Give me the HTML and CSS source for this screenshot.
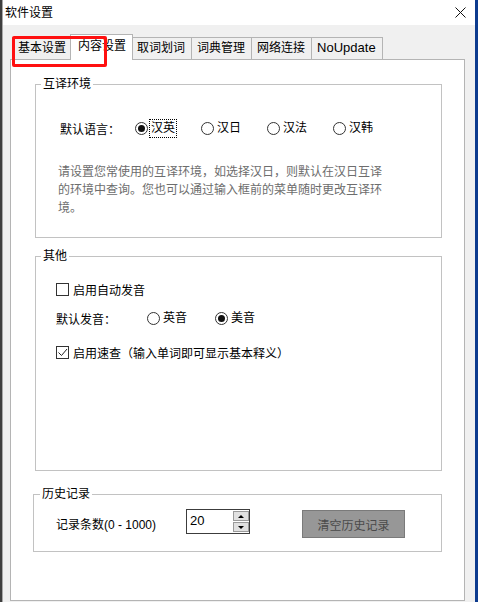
FILE: index.html
```html
<!DOCTYPE html>
<html lang="zh-CN">
<head>
    <meta charset="UTF-8">
    <title>软件设置</title>
    <link rel="stylesheet" href="styles.css">
</head>
<body>
    <div class="window">
        <div class="titlebar">
            <span class="title">软件设置</span>
            <svg class="close" width="11" height="11" viewBox="0 0 11 11">
                <path d="M0.5 0.5 L10.5 10.5 M10.5 0.5 L0.5 10.5" stroke="#111" stroke-width="1"/>
            </svg>
        </div>

        <div class="dialog">
            <div class="tabs">
                <div class="tab">基本设置</div>
                <div class="tab active">内容设置</div>
                <div class="tab">取词划词</div>
                <div class="tab">词典管理</div>
                <div class="tab">网络连接</div>
                <div class="tab latin last">NoUpdate</div>
            </div>

            <div class="panel">
                <fieldset class="group group-lang">
                    <legend>互译环境</legend>
                    <div class="row lang-row">
                        <span class="label">默认语言：</span>
                        <label class="radio-item"><span class="radio checked"></span><span class="focus">汉英</span></label>
                        <label class="radio-item"><span class="radio"></span><span class="text">汉日</span></label>
                        <label class="radio-item"><span class="radio"></span><span class="text">汉法</span></label>
                        <label class="radio-item"><span class="radio"></span><span class="text">汉韩</span></label>
                    </div>
                    <p class="desc">请设置您常使用的互译环境，如选择汉日，则默认在汉日互译的环境中查询。您也可以通过输入框前的菜单随时更改互译环境。</p>
                </fieldset>

                <fieldset class="group group-other">
                    <legend>其他</legend>
                    <label class="row check-row first">
                        <span class="checkbox"></span><span class="text">启用自动发音</span>
                    </label>
                    <div class="row voice-row">
                        <span class="label">默认发音：</span>
                        <label class="radio-item"><span class="radio"></span><span class="text">英音</span></label>
                        <label class="radio-item"><span class="radio checked"></span><span class="text">美音</span></label>
                    </div>
                    <label class="row check-row">
                        <span class="checkbox">
                            <svg width="11" height="11" viewBox="0 0 11 11">
                                <path d="M1.5 5.5 L4.5 8.5 L10 2" fill="none" stroke="#222" stroke-width="1"/>
                            </svg>
                        </span><span class="text">启用速查（输入单词即可显示基本释义）</span>
                    </label>
                </fieldset>

                <fieldset class="group group-history">
                    <legend>历史记录</legend>
                    <div class="row history-row">
                        <span class="label">记录条数(0 - 1000)</span>
                        <div class="spin">
                            <span class="spin-value">20</span>
                            <div class="spin-btns">
                                <span class="spin-btn up"></span>
                                <span class="spin-btn down"></span>
                            </div>
                        </div>
                        <button class="clear-btn">清空历史记录</button>
                    </div>
                </fieldset>
            </div>
        </div>

        <div class="highlight"></div>
    </div>
</body>
</html>
```

FILE: styles.css
```css
body {
    margin: 0;
    padding: 0;
    width: 478px;
    height: 602px;
    overflow: hidden;
    background: linear-gradient(to right, #3f3f3f 0 2px, #0d3b8e 2px);
    font-family: "Liberation Sans", "Noto Sans CJK SC", sans-serif;
    font-size: 12px;
    color: #000;
}

.window {
    position: relative;
    margin-left: 2px;
    width: 472px;
    height: 602px;
    border-left: 1px solid #a8a8a8;
    background-color: #f0f0f0;
}

.titlebar {
    height: 25px;
    background-color: #ffffff;
    display: flex;
    justify-content: space-between;
    align-items: center;
    padding: 0 9px 0 2px;
}

.title {
    line-height: 16px;
}

.close {
    display: block;
}

.dialog {
    padding: 9px 10px 0 7px;
}

.tabs {
    height: 25px;
    display: flex;
    align-items: flex-end;
    padding-left: 2px;
}

.tab {
    box-sizing: border-box;
    height: 22px;
    line-height: 20px;
    padding: 0 6px 0 5px;
    border: 1px solid #b4b4b4;
    border-right: none;
    border-bottom: none;
    background-color: #f0f0f0;
}

.tab.last {
    border-right: 1px solid #b4b4b4;
}

.tab.latin {
    font-size: 13px;
}

.tab.active {
    position: relative;
    z-index: 1;
    height: 26px;
    line-height: 22px;
    margin: 0 -2px -1px -2px;
    padding: 0 6px 0 7px;
    border-right: 1px solid #b4b4b4;
    background-color: #ffffff;
}

.panel {
    box-sizing: border-box;
    height: 542px;
    border: 1px solid #b4b4b4;
    background-color: #ffffff;
    overflow: hidden;
}

.group {
    margin: 0 22px 0 24px;
    padding: 0 0 0 22px;
    border: 1px solid #c2c2c2;
    min-width: 0;
}

.group legend {
    margin-left: -17px;
    padding: 0 2px;
    line-height: 16px;
}

.group-lang {
    margin-top: 16px;
    padding-bottom: 20px;
}

.group-other {
    box-sizing: border-box;
    margin-top: 10px;
    height: 223px;
    padding-left: 20px;
}

.group-other legend {
    margin-left: -15px;
}

.group-history {
    margin-top: 15px;
    margin-left: 22px;
    padding-left: 22px;
    padding-bottom: 13px;
}

.group-history legend {
    margin-left: -16px;
}

.row {
    display: flex;
    align-items: center;
}

.label {
    flex-shrink: 0;
}

.lang-row {
    margin: 26px 0 0 2px;
    height: 20px;
}

.lang-row .label {
    width: 75px;
}

.radio-item {
    display: flex;
    align-items: center;
    flex-shrink: 0;
    width: 66px;
}

.voice-row .label {
    width: 91px;
}

.voice-row .radio-item {
    width: 68px;
}

.radio {
    box-sizing: border-box;
    width: 13px;
    height: 13px;
    border: 1px solid #333;
    border-radius: 50%;
    background-color: #fff;
    display: flex;
    justify-content: center;
    align-items: center;
}

.radio.checked::after {
    content: "";
    width: 7px;
    height: 7px;
    border-radius: 50%;
    background-color: #111;
}

.radio-item .text {
    margin-left: 3px;
    line-height: 18px;
}

.focus {
    margin-left: 1px;
    padding: 0 1px;
    line-height: 17px;
    border: 1px dotted #000;
}

.desc {
    margin: 25px 0 0;
    width: 328px;
    line-height: 18px;
    color: #6d6d6d;
}

.check-row {
    height: 18px;
    margin-top: 16px;
}

.checkbox {
    box-sizing: border-box;
    width: 13px;
    height: 13px;
    border: 1px solid #333;
    background-color: #fff;
    display: flex;
    justify-content: center;
    align-items: center;
}

.checkbox svg {
    display: block;
}

.check-row .text {
    margin-left: 4px;
}

.voice-row {
    height: 18px;
    margin-top: 11px;
}

.history-row {
    margin-top: 7px;
    height: 29px;
}

.history-row .label {
    width: 130px;
}

.spin {
    box-sizing: border-box;
    width: 64px;
    height: 25px;
    border: 1px solid #3c3c3c;
    display: flex;
    align-self: flex-start;
}

.spin-value {
    flex: 1;
    padding-left: 3px;
    font-size: 13px;
    line-height: 22px;
}

.spin-btns {
    width: 16px;
    display: flex;
    flex-direction: column;
    gap: 1px;
    padding: 1px 0 1px 0;
    background-color: #fff;
}

.spin-btn {
    flex: 1;
    border: 1px solid #9a9a9a;
    background-color: #e1e1e1;
    display: flex;
    justify-content: center;
    align-items: center;
}

.spin-btn.up::after {
    content: "";
    border-left: 3px solid transparent;
    border-right: 3px solid transparent;
    border-bottom: 3px solid #000;
}

.spin-btn.down::after {
    content: "";
    border-left: 3px solid transparent;
    border-right: 3px solid transparent;
    border-top: 3px solid #000;
}

.clear-btn {
    margin-left: 52px;
    align-self: flex-start;
    margin-top: 1px;
    width: 103px;
    height: 28px;
    padding: 0;
    border: 1px solid #7a7a7a;
    background-color: #979797;
    color: #4a4a4a;
    font-family: "Liberation Sans", "Noto Sans CJK SC", sans-serif;
    font-size: 12px;
}

.highlight {
    position: absolute;
    z-index: 2;
    left: 9px;
    top: 36px;
    box-sizing: border-box;
    width: 95px;
    height: 31px;
    border: 3px solid #ff1010;
    border-radius: 2px;
}
```
